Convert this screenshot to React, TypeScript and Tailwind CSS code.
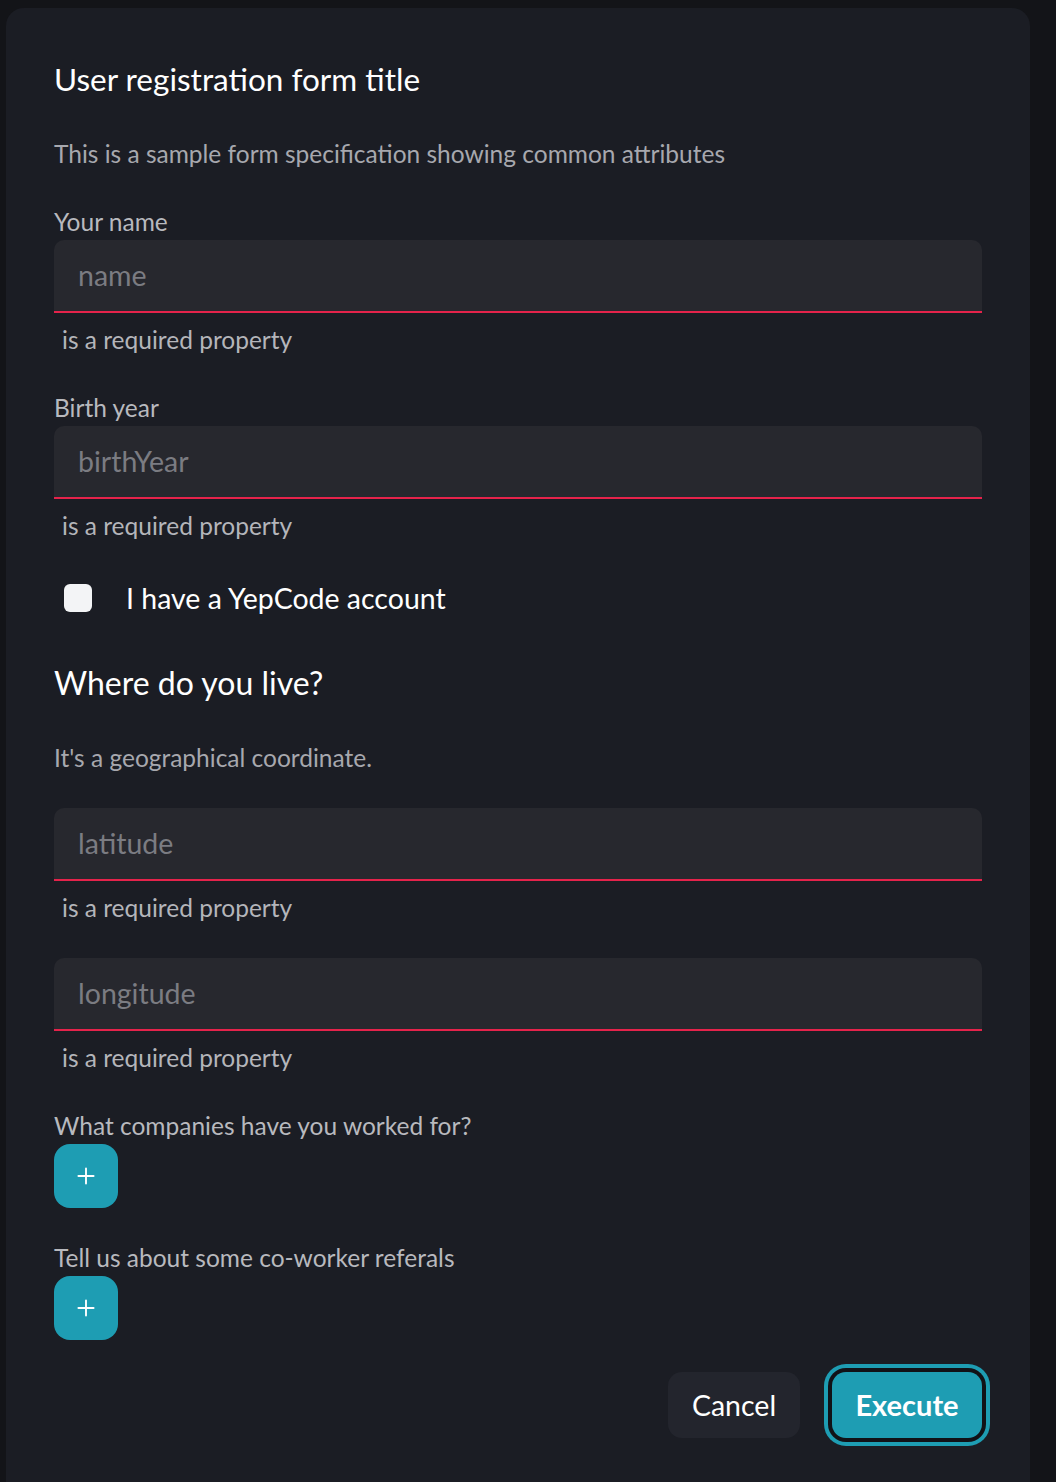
import { Plus } from 'lucide-react';

const font = { fontFamily: 'Lato, "Open Sans", sans-serif' };

function Field({ placeholder, className = '' }: { placeholder: string; className?: string }) {
    return (
        <div className={className}>
            <div className="h-[73px] rounded-t-[10px] bg-[#27282e] border-b-2 border-[#e5234b] flex items-center px-6">
                <span className="text-[28.5px] text-[#7b7c82]">{placeholder}</span>
            </div>
            <p className="mt-3 pl-2 text-[24.5px] leading-[30px] text-[#b4b5ba]">is a required property</p>
        </div>
    );
}

function AddButton() {
    return (
        <button className="mt-[3px] w-16 h-16 rounded-[16px] bg-[#1e9db3] flex items-center justify-center">
            <Plus size={26} strokeWidth={1.75} className="text-white" />
        </button>
    );
}

export default function App() {
    return (
        <div className="min-h-screen bg-[#131418] pl-[6px] pt-[8px] pr-[26px]" style={font}>
            <div className="w-[1024px] min-h-[1474px] bg-[#1b1d24] rounded-t-[18px] px-12 pt-[51px]">
                <h1 className="text-[31.5px] leading-[40px] text-white">User registration form title</h1>
                <p className="mt-10 text-[24.5px] leading-[30px] text-[#a7a8ae]">
                    This is a sample form specification showing common attributes
                </p>

                <label className="block mt-[38px] text-[24.5px] leading-[30px] text-[#b8b9be]">Your name</label>
                <Field placeholder="name" className="mt-[3px]" />

                <label className="block mt-[38px] text-[24.5px] leading-[30px] text-[#b8b9be]">Birth year</label>
                <Field placeholder="birthYear" className="mt-[3px]" />

                <div className="mt-[43px] flex items-center pl-[10px] h-7">
                    <span className="w-7 h-7 rounded-[6px] bg-[#f3f4f6]" />
                    <span className="ml-[34px] text-[28.5px] leading-[28px] text-white">I have a YepCode account</span>
                </div>

                <h2 className="mt-[51px] text-[32px] leading-[40px] text-white">Where do you live?</h2>
                <p className="mt-10 text-[24.5px] leading-[30px] text-[#a7a8ae]">It's a geographical coordinate.</p>

                <Field placeholder="latitude" className="mt-[35px]" />
                <Field placeholder="longitude" className="mt-[35px]" />

                <label className="block mt-[38px] text-[24.5px] leading-[30px] text-[#b8b9be]">
                    What companies have you worked for?
                </label>
                <AddButton />

                <label className="block mt-[35px] text-[24.5px] leading-[30px] text-[#b8b9be]">
                    Tell us about some co-worker referals
                </label>
                <AddButton />

                <div className="mt-[32px] flex justify-end gap-8">
                    <button className="w-[132px] h-[66px] rounded-[14px] bg-[#23252d] text-[28.5px] text-white">Cancel</button>
                    <button className="w-[150px] h-[66px] rounded-[14px] bg-[#1e9db3] text-[29px] font-bold text-white ring-4 ring-[#1e9db3] ring-offset-4 ring-offset-[#111217]">
                        Execute
                    </button>
                </div>
            </div>
        </div>
    );
}
